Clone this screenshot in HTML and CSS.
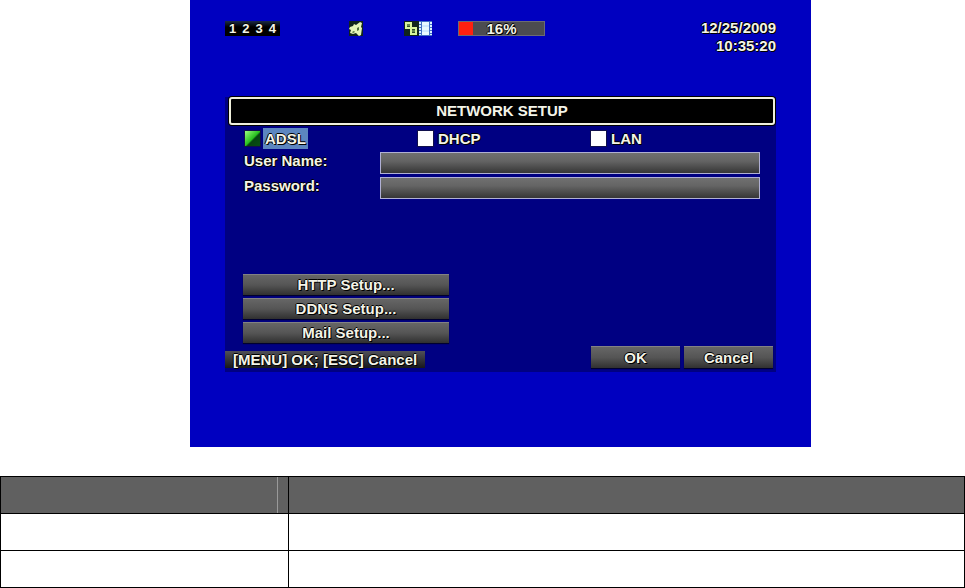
FILE: index.html
```html
<!DOCTYPE html>
<html lang="en">
<head>
    <meta charset="UTF-8">
    <meta name="viewport" content="width=device-width, initial-scale=1.0">
    <title>Network Setup</title>
    <link rel="stylesheet" href="styles.css">
</head>
<body>
    <main class="screen">
        <!-- Status bar -->
        <header class="status">
            <div class="channels"><span>1</span><span>2</span><span>3</span><span>4</span></div>
            <svg class="icon-sound" width="14" height="15" viewBox="0 0 14 15" aria-label="Sound">
                <rect width="14" height="15" fill="#10241c"/>
                <path d="M1 6l3-1 1-2 2 1 4-3 2 1-1 4 1 1-1 7-2 1-3-3-3 1-3-1 1-3-2-1z" fill="#e4f5b8"/>
                <path d="M8 7l2-1v3l-2 1zM3 11l2-1 1 1-2 1z" fill="#50703c"/>
            </svg>
            <svg class="icon-network" width="28" height="15" viewBox="0 0 28 15" aria-label="Network and recording">
                <rect width="15" height="15" fill="#10241c"/>
                <path d="M2 2h5v5H2zM7 7h5v6H7z" fill="#304c28" stroke="#d8f49c" stroke-width="2"/>
                <path d="M3 4h3M8 10h3" stroke="#a0c878"/>
                <rect x="15" width="13" height="15" fill="#426fc4"/>
                <path d="M18 1h7v13h-7z" fill="#e9faff"/>
                <path d="M18 5h7M18 10h7" stroke="#b4d8ff"/>
                <path d="M16 1v13M27 1v13" stroke="#d9f1ff" stroke-width="2" stroke-dasharray="2 1"/>
            </svg>
            <div class="disk">
                <div class="disk-used"></div>
                <span class="disk-text">16%</span>
            </div>
            <div class="clock">
                <div>12/25/2009</div>
                <div>10:35:20</div>
            </div>
        </header>

        <!-- Setup window -->
        <form class="dialog">
            <h1>NETWORK SETUP</h1>

            <div class="modes">
                <div class="mode">
                    <input type="radio" name="mode" id="adsl" checked>
                    <label for="adsl">ADSL</label>
                </div>
                <div class="mode">
                    <input type="radio" name="mode" id="dhcp">
                    <label for="dhcp">DHCP</label>
                </div>
                <div class="mode">
                    <input type="radio" name="mode" id="lan">
                    <label for="lan">LAN</label>
                </div>
            </div>

            <div class="fields">
                <label for="user">User Name:</label>
                <input type="text" id="user">
                <label for="password">Password:</label>
                <input type="password" id="password">
            </div>

            <div class="links">
                <button type="button" class="btn">HTTP Setup...</button>
                <button type="button" class="btn">DDNS Setup...</button>
                <button type="button" class="btn">Mail Setup...</button>
            </div>

            <div class="actions">
                <p class="hint">[MENU] OK; [ESC] Cancel</p>
                <button type="button" class="btn">OK</button>
                <button type="button" class="btn">Cancel</button>
            </div>
        </form>
    </main>

    <!-- Description table -->
    <table class="items">
        <thead>
            <tr>
                <th class="item"><div class="divider"></div></th>
                <th></th>
            </tr>
        </thead>
        <tbody>
            <tr>
                <td></td>
                <td></td>
            </tr>
            <tr>
                <td></td>
                <td></td>
            </tr>
        </tbody>
    </table>
</body>
</html>
```

FILE: styles.css
```css
* {
    box-sizing: border-box;
}
body {
    margin: 0;
    background-color: #fff;
    font-family: "Liberation Sans", Arial, sans-serif;
}
/* Blue monitor screen */
.screen {
    margin: 0 154px 0 190px;
    padding: 21px 35px 75px;
    background-color: #0000c0;
    color: #f4f4e8;
    font-size: 15px;
    font-weight: bold;
    line-height: 18px;
    text-shadow: 1px 1px 0 #000, -1px 0 0 #000, 0 -1px 0 #000;
}
/* Status bar */
.status {
    display: grid;
    grid-template-columns: 124px 55px 54px 87px 1fr;
    align-items: start;
    height: 76px;
}
.channels {
    display: flex;
    justify-content: space-around;
    width: 55px;
    padding: 0 1px;
    background: linear-gradient(#1c2c48, #000 40%);
    font-size: 13px;
    line-height: 15px;
}
.disk {
    position: relative;
    height: 15px;
    border: 1px solid #6c6c74;
    background-color: #4c4c50;
    text-align: center;
    line-height: 14px;
}
.disk-used {
    position: absolute;
    left: 0;
    top: 0;
    width: 16%;
    height: 100%;
    background-color: #ff2010;
}
.disk-text {
    position: relative;
}
.clock {
    margin-top: -2px;
    text-align: right;
}
/* Setup window */
.dialog {
    padding-bottom: 4px;
    background-color: #000082;
}
h1 {
    margin: 0 1px 0 4px;
    border: 2px solid #f0f0dc;
    border-radius: 3px;
    background-color: #000;
    box-shadow: 0 0 0 1px #000;
    font-size: 15px;
    line-height: 24px;
    text-align: center;
}
/* Connection type */
.modes {
    display: grid;
    grid-template-columns: 173px 173px 1fr;
    padding: 3px 0 3px 20px;
}
.mode {
    display: flex;
    align-items: center;
    gap: 3px;
}
.mode label {
    padding: 0 2px;
    line-height: 21px;
}
.mode input {
    appearance: none;
    width: 15px;
    height: 15px;
    margin: 0;
    background-color: #fff;
    box-shadow: 0 0 0 1px #10104c;
}
.mode input:checked {
    background: linear-gradient(135deg, #9cff80, #28c020 50%, #064410 58%, #085014);
}
.mode input:checked + label {
    background-color: #5c86c0;
}
/* Account fields */
.fields {
    display: grid;
    grid-template-columns: 136px 1fr;
    row-gap: 3px;
    padding: 0 16px 0 19px;
}
.fields input {
    width: 100%;
    height: 22px;
    padding: 0 4px;
    border: 1px solid #b0b0d4;
    background: linear-gradient(#707070, #646464 40%, #363636);
    color: #f4f4e8;
    font: inherit;
}
/* Buttons */
.btn {
    height: 21px;
    padding: 0;
    border: 0;
    border-top: 1px solid #828284;
    background: linear-gradient(#666, #555 50%, #303030);
    box-shadow: 0 1px 1px #000030;
    color: inherit;
    font: inherit;
    line-height: 18px;
    text-shadow: inherit;
}
.links {
    display: grid;
    row-gap: 3px;
    width: 206px;
    margin: 75px 0 3px 18px;
}
.actions {
    display: grid;
    grid-template-columns: 1fr 89px 89px;
    column-gap: 4px;
    padding-right: 3px;
}
.actions .btn {
    height: 22px;
}
.hint {
    justify-self: start;
    align-self: end;
    margin: 0;
    padding: 0 8px;
    background: linear-gradient(#505058, #18181c);
    line-height: 17px;
}
/* Description table */
.items {
    width: 100%;
    margin-top: 29px;
    border-collapse: collapse;
}
.items th, .items td {
    height: 37px;
    padding: 0;
    border: 1px solid #000;
}
.items th {
    background-color: #606060;
}
.item {
    width: 288px;
}
.divider {
    height: 36px;
    margin-right: 10px;
    border-right: 1px solid #999;
}
```
